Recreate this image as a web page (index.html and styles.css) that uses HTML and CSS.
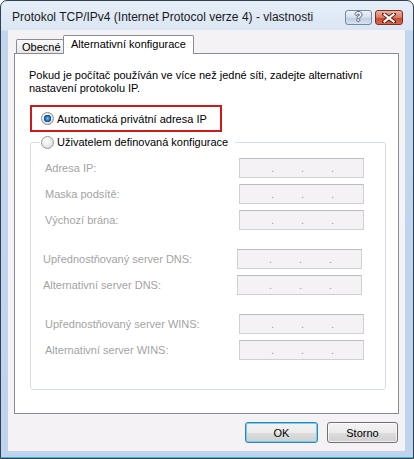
FILE: index.html
```html
<!DOCTYPE html>
<html lang="cs">
<head>
<meta charset="utf-8">
<title>Protokol TCP/IPv4 - vlastnosti</title>
<link rel="stylesheet" href="styles.css">
</head>
<body>
<div class="window">
  <div class="titlebar">
    <span class="title">Protokol TCP/IPv4 (Internet Protocol verze 4) - vlastnosti</span>
    <div class="caption-btns">
      <span class="cbtn help">?</span>
      <span class="cbtn close">
        <svg width="14" height="10" viewBox="0 0 14 10"><path d="M2 1 L12 9 M12 1 L2 9" stroke="#5a1a10" stroke-width="4" stroke-linecap="square" fill="none"/><path d="M2.5 1.5 L11.5 8.5 M11.5 1.5 L2.5 8.5" stroke="#ffffff" stroke-width="2.2" stroke-linecap="square" fill="none"/></svg>
      </span>
    </div>
  </div>
  <div class="client">
    <div class="tabs">
      <div class="tab">Obecné</div>
      <div class="tab active">Alternativní konfigurace</div>
    </div>
    <div class="panel">
      <p class="intro">Pokud je počítač používán ve více než jedné síti, zadejte alternativní<br>nastavení protokolu IP.</p>
      <div class="highlight">
        <label class="opt"><span class="radio checked"></span>Automatická privátní adresa IP</label>
      </div>
      <fieldset class="group">
        <legend><label class="opt"><span class="radio"></span>Uživatelem definovaná konfigurace</label></legend>
        <div class="section first">
          <span class="lbl">Adresa IP:</span><span class="ip"><span>.</span><span>.</span><span>.</span></span>
          <span class="lbl">Maska podsítě:</span><span class="ip"><span>.</span><span>.</span><span>.</span></span>
          <span class="lbl">Výchozí brána:</span><span class="ip"><span>.</span><span>.</span><span>.</span></span>
        </div>
        <div class="section shifted">
          <span class="lbl">Upřednostňovaný server DNS:</span><span class="ip"><span>.</span><span>.</span><span>.</span></span>
          <span class="lbl">Alternativní server DNS:</span><span class="ip"><span>.</span><span>.</span><span>.</span></span>
        </div>
        <div class="section">
          <span class="lbl">Upřednostňovaný server WINS:</span><span class="ip"><span>.</span><span>.</span><span>.</span></span>
          <span class="lbl">Alternativní server WINS:</span><span class="ip"><span>.</span><span>.</span><span>.</span></span>
        </div>
      </fieldset>
    </div>
    <div class="buttons">
      <button class="btn default">OK</button>
      <button class="btn cancel">Storno</button>
    </div>
  </div>
</div>
</body>
</html>
```

FILE: styles.css
```css
html, body {
  margin: 0;
  padding: 0;
  background: #ffffff;
}

body {
  font-family: "Liberation Sans", Arial, sans-serif;
  font-size: 11px;
  color: #000000;
}

.window {
  width: 414px;
  height: 459px;
  box-sizing: border-box;
  border: 1px solid #33404f;
  border-radius: 7px 7px 0 0;
  background: linear-gradient(to bottom, #e6eef8 0, #dbe6f4 29px, #c3d6ef 30px, #bfd3ef 100%);
  padding: 0 8px 7px 7px;
  display: flex;
  flex-direction: column;
  box-shadow: inset 0 -1px 0 #3fb7d6;
}

.titlebar {
  height: 29px;
  display: flex;
  justify-content: space-between;
  align-items: flex-start;
  flex: none;
}

.title {
  font-size: 12px;
  line-height: 15px;
  padding: 9px 0 0 4px;
  color: #1a1a1a;
  white-space: nowrap;
}

.caption-btns {
  display: flex;
  gap: 3px;
  padding: 9px 2px 0 0;
}

.cbtn {
  height: 15px;
  box-sizing: border-box;
  border-radius: 3px;
  display: flex;
  align-items: center;
  justify-content: center;
}

.help {
  width: 27px;
  border: 1px solid #7487a3;
  background: linear-gradient(to bottom, #eef3f9 0, #d4dfec 50%, #bccbe0 51%, #d7e2ef 100%);
  color: #ffffff;
  font-weight: bold;
  font-size: 12px;
  line-height: 13px;
  text-shadow: -1px 0 #4d5f7a, 1px 0 #4d5f7a, 0 -1px #4d5f7a, 0 1px #4d5f7a;
}

.close {
  width: 28px;
  border: 1px solid #7a2f22;
  background: linear-gradient(to bottom, #eab3a3 0, #d77a62 50%, #c2452b 51%, #d86b4c 100%);
}

.client {
  flex: 1;
  background: #f5f2f6;
  padding: 5px 6px 0 6px;
  display: flex;
  flex-direction: column;
}

.tabs {
  height: 18px;
  display: flex;
  align-items: flex-end;
  padding-left: 2px;
  flex: none;
  position: relative;
  z-index: 1;
}

.tab {
  box-sizing: border-box;
  border: 1px solid #898c95;
  border-bottom: none;
  white-space: nowrap;
}

.tab:not(.active) {
  width: 48px;
  height: 14px;
  margin-right: -1px;
  padding: 1px 0 0 5px;
  line-height: 13px;
  background: linear-gradient(to bottom, #fbfbfb 0, #f1f1f1 50%, #e6e6e6 100%);
  border-radius: 2px 2px 0 0;
}

.tab.active {
  width: 131px;
  height: 19px;
  margin-bottom: -1px;
  padding: 2px 0 0 7px;
  line-height: 13px;
  background: #ffffff;
  border-radius: 2px 2px 0 0;
}

.panel {
  flex: 1;
  border: 1px solid #898c95;
  background: #ffffff;
  padding: 15px 0 0 14px;
}

.intro {
  margin: 0;
  line-height: 13px;
}

.highlight {
  margin: 10px 0 0 1px;
  width: 192px;
  height: 27px;
  box-sizing: border-box;
  border: 2px solid #cc1a1a;
  padding-left: 9px;
  display: flex;
  align-items: center;
}

.opt {
  display: flex;
  align-items: center;
  gap: 3px;
  line-height: 14px;
  white-space: nowrap;
}

.radio {
  width: 13px;
  height: 13px;
  box-sizing: border-box;
  border-radius: 50%;
  border: 1px solid #9a9a9a;
  background: radial-gradient(circle at 40% 35%, #ffffff 0, #eeeeee 45%, #cfcfcf 100%);
  flex: none;
}

.radio.checked {
  border-color: #8a8a8a;
  background:
    radial-gradient(circle at 50% 50%, #7fd0ff 0, #2a8ad8 1.6px, #1b5fa8 2.8px, #16447a 3.5px, rgba(0,0,0,0) 3.9px),
    radial-gradient(circle at 40% 35%, #ffffff 0, #eeeeee 45%, #cfcfcf 100%);
}

.group {
  margin: 3px 0 0 1px;
  width: 356px;
  height: 255px;
  box-sizing: border-box;
  border: 1px solid #d5dfe5;
  border-radius: 3px;
  padding: 0 0 0 14px;
}

.group legend {
  padding: 0 7px 0 1px;
  margin-left: -5px;
}

.section {
  display: grid;
  grid-template-columns: 194px 125px;
  grid-auto-rows: 20px;
  row-gap: 6px;
  align-items: center;
  margin-top: 19px;
}

.section.first {
  margin-top: 9px;
}

.section.shifted {
  margin-left: -2px;
}

.lbl {
  color: #a3a3a3;
  white-space: nowrap;
}

.ip {
  height: 20px;
  box-sizing: border-box;
  border: 1px solid #cfd0d4;
  border-top-color: #b9bbc0;
  background: #f5f2f6;
  display: flex;
  padding-left: 31px;
  line-height: 18px;
  color: #9a9a9a;
}

.ip span {
  width: 30px;
}

.buttons {
  height: 37px;
  flex: none;
  display: flex;
  justify-content: flex-end;
  align-items: flex-start;
  gap: 9px;
  padding: 8px 1px 0 0;
  box-sizing: border-box;
}

.btn {
  height: 21px;
  box-sizing: border-box;
  border: 1px solid #707070;
  border-radius: 3px;
  background: linear-gradient(to bottom, #f3f3f3 0, #ebebeb 50%, #dddddd 51%, #cfcfcf 100%);
  font-family: "Liberation Sans", Arial, sans-serif;
  font-size: 11px;
  font-weight: 400;
  color: #000000;
  padding: 0;
  margin: 0;
  box-shadow: inset 0 0 0 1px rgba(255, 255, 255, 0.7);
}

.btn.default {
  width: 73px;
  border-color: #3c7fb1;
  box-shadow: inset 0 0 0 1px #66d4f5;
}

.btn.cancel {
  width: 71px;
}
```
